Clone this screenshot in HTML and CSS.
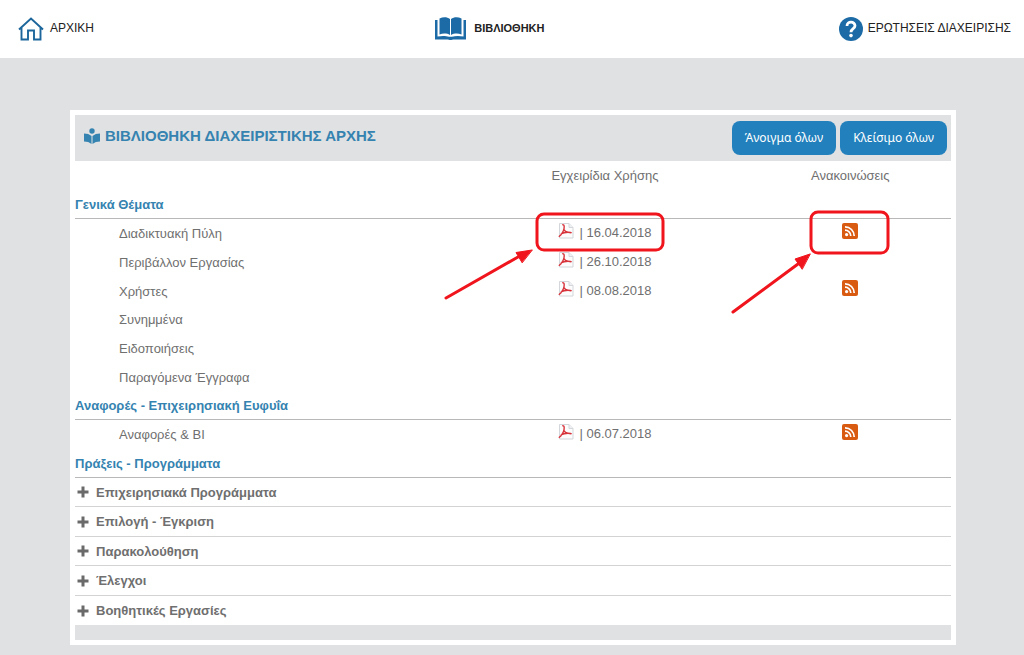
FILE: index.html
```html
<!DOCTYPE html>
<html lang="el">
<head>
<meta charset="utf-8">
<title>Βιβλιοθήκη Διαχειριστικής Αρχής</title>
<link rel="stylesheet" href="styles.css">
</head>
<body>
<svg class="defs" aria-hidden="true">
  <symbol id="pdf" viewBox="0 0 16 16">
    <path d="M1.5.5h9.500l4 4v10.500h-13.500z" fill="#fcfcfc" stroke="#d3d6da"/>
    <path d="M11 .5v4h4" fill="#eef1f4" stroke="#d3d6da"/>
    <path d="M4.300 1.800C6.800 1.200 6.500 5 5.300 8C4.300 10.500 2.500 12.500.8 13.800M5.800 6.500C7 8.300 8.200 9 9.500 9.300M2.800 11C5 9.800 8 9.300 10 9.300C12 9.300 13 9.400 13.600 10" fill="none" stroke="#d8343c" stroke-width="1.400"/>
  </symbol>
  <symbol id="rss" viewBox="0 0 16 16">
    <rect width="16" height="16" rx="2" fill="#d95b12"/>
    <circle cx="4.600" cy="11.600" r="1.600" fill="#fff"/>
    <path d="M3 7.200a5.800 5.800 0 0 1 5.800 5.800M3 3.800a9.200 9.200 0 0 1 9.200 9.200" fill="none" stroke="#fff" stroke-width="1.700"/>
  </symbol>
  <symbol id="plus" viewBox="0 0 12 12">
    <path d="M4.500.5h3v4h4v3h-4v4h-3v-4h-4v-3h4z" fill="#6a6a6a"/>
  </symbol>
</svg>

<header class="topbar">
  <a class="nav nav-home" href="#home">
    <svg class="nav-icon home-icon" viewBox="0 0 26 24" fill="none" stroke="#1c669b" stroke-width="1.900">
      <path d="M1 12.500L13 1.500L25 12.500M3.500 10.500V22.500H10V13.500H16V22.500H22.500V10.500"/>
    </svg>
    <span>ΑΡΧΙΚΗ</span>
  </a>
  <a class="nav nav-library" href="#library">
    <svg class="nav-icon book-icon" viewBox="0 0 31 23" fill="#1c6ba6">
      <path d="M4.500 1.500C8-.3 12-.3 15 2v16c-3-1.800-7-1.800-10.500-.6zM16 2c3-2.300 7-2.300 10.500-.5v15.900C23 16.200 19 16.200 16 18z"/>
      <path d="M0 3h2.500v16.500c4-.8 8.500-.8 11.500.3h3c3-1.100 7.500-1.100 11.500-.3V3H31v19.500H18c-.5.700-4.500.700-5 0H0z"/>
    </svg>
    <span>ΒΙΒΛΙΟΘΗΚΗ</span>
  </a>
  <a class="nav nav-help" href="#help">
    <svg class="nav-icon help-icon" viewBox="0 0 24 24">
      <circle cx="12" cy="12" r="12" fill="#1c6ba6"/>
      <path d="M8 9C8 4 16 4 16 8.800C16 11.800 12 11.500 12 15.200" fill="none" stroke="#fff" stroke-width="2.800"/>
      <circle cx="12" cy="18.600" r="1.800" fill="#fff"/>
    </svg>
    <span>ΕΡΩΤΗΣΕΙΣ ΔΙΑΧΕΙΡΙΣΗΣ</span>
  </a>
</header>

<main class="card">
  <div class="titlebar">
    <h1 class="title">
      <svg class="title-icon" viewBox="0 0 16 16" fill="#3583b0">
        <circle cx="8" cy="3" r="2.700"/>
        <path d="M0 5.500c3 0 5.500.8 7.500 2.500v8C5.500 14.300 3 13.500 0 13.500zM16 5.500c-3 0-5.500.8-7.500 2.500v8c2-1.700 4.500-2.500 7.500-2.500z"/>
      </svg>
      <span>ΒΙΒΛΙΟΘΗΚΗ ΔΙΑΧΕΙΡΙΣΤΙΚΗΣ ΑΡΧΗΣ</span>
    </h1>
    <div class="actions">
      <button class="btn" type="button">Άνοιγμα όλων</button>
      <button class="btn" type="button">Κλείσιμο όλων</button>
    </div>
  </div>

  <table class="library">
    <colgroup><col class="col-name"><col class="col-manual"><col class="col-news"></colgroup>
    <thead>
      <tr><td></td><th scope="col">Εγχειρίδια Χρήσης</th><th scope="col">Ανακοινώσεις</th></tr>
    </thead>
    <tbody>
      <tr class="section"><th colspan="3" scope="rowgroup">Γενικά Θέματα</th></tr>
      <tr class="item">
        <td>Διαδικτυακή Πύλη</td>
        <td>
          <span class="marked">
            <a class="manual" href="#m1"><svg class="icon"><use href="#pdf"/></svg><span>| 16.04.2018</span></a>
            <svg class="mark mark-manual" viewBox="0 0 222 92" aria-hidden="true">
              <rect x="93" y="5" width="126" height="36" rx="7"/>
              <path d="M2 89L74 48"/>
              <path class="head" d="M88 41L72 43.500L78 53.500z"/>
            </svg>
          </span>
        </td>
        <td>
          <span class="marked">
            <a class="news" href="#n1" aria-label="Ανακοινώσεις"><svg class="icon"><use href="#rss"/></svg></a>
            <svg class="mark mark-news" viewBox="0 0 160 106" aria-hidden="true">
              <rect x="80" y="4" width="77" height="41" rx="7"/>
              <path d="M2 104L67 56"/>
              <path class="head" d="M79 46L64 51L71 61z"/>
            </svg>
          </span>
        </td>
      </tr>
      <tr class="item">
        <td>Περιβάλλον Εργασίας</td>
        <td><a class="manual" href="#m2"><svg class="icon"><use href="#pdf"/></svg><span>| 26.10.2018</span></a></td>
        <td></td>
      </tr>
      <tr class="item">
        <td>Χρήστες</td>
        <td><a class="manual" href="#m3"><svg class="icon"><use href="#pdf"/></svg><span>| 08.08.2018</span></a></td>
        <td><a class="news" href="#n3" aria-label="Ανακοινώσεις"><svg class="icon"><use href="#rss"/></svg></a></td>
      </tr>
      <tr class="item"><td>Συνημμένα</td><td></td><td></td></tr>
      <tr class="item"><td>Ειδοποιήσεις</td><td></td><td></td></tr>
      <tr class="item"><td>Παραγόμενα Έγγραφα</td><td></td><td></td></tr>
    </tbody>
    <tbody>
      <tr class="section"><th colspan="3" scope="rowgroup">Αναφορές - Επιχειρησιακή Ευφυΐα</th></tr>
      <tr class="item">
        <td>Αναφορές &amp; BI</td>
        <td><a class="manual" href="#m4"><svg class="icon"><use href="#pdf"/></svg><span>| 06.07.2018</span></a></td>
        <td><a class="news" href="#n4" aria-label="Ανακοινώσεις"><svg class="icon"><use href="#rss"/></svg></a></td>
      </tr>
    </tbody>
    <tbody>
      <tr class="section"><th colspan="3" scope="rowgroup">Πράξεις - Προγράμματα</th></tr>
      <tr class="group"><td colspan="3"><button class="toggle" type="button"><svg class="plus"><use href="#plus"/></svg>Επιχειρησιακά Προγράμματα</button></td></tr>
      <tr class="group"><td colspan="3"><button class="toggle" type="button"><svg class="plus"><use href="#plus"/></svg>Επιλογή - Έγκριση</button></td></tr>
      <tr class="group"><td colspan="3"><button class="toggle" type="button"><svg class="plus"><use href="#plus"/></svg>Παρακολούθηση</button></td></tr>
      <tr class="group"><td colspan="3"><button class="toggle" type="button"><svg class="plus"><use href="#plus"/></svg>Έλεγχοι</button></td></tr>
      <tr class="group"><td colspan="3"><button class="toggle" type="button"><svg class="plus"><use href="#plus"/></svg>Βοηθητικές Εργασίες</button></td></tr>
    </tbody>
  </table>
  <div class="card-foot"></div>
</main>
</body>
</html>
```
FILE: styles.css
```css
* { box-sizing: border-box; }

body {
  margin: 0;
  background: #e0e1e3;
  color: #6f6f6f;
  font-family: "Liberation Sans", Arial, sans-serif;
  font-size: 13px;
}

a { color: inherit; text-decoration: none; }
button { font: inherit; color: inherit; cursor: pointer; }
.defs { display: none; }

/* Top navigation */
.topbar {
  display: grid;
  grid-template-columns: 42.5% 1fr auto;
  align-items: center;
  padding: 16px 0 17px;
  background: #fff;
  color: #222;
  font-size: 12px;
}
.nav { display: flex; align-items: center; line-height: 25px; }
.nav-icon { flex: none; }
.nav-home { padding-left: 18px; gap: 6px; }
.home-icon { width: 26px; height: 24px; }
.nav-library { gap: 8px; font-weight: bold; font-size: 11px; }
.book-icon { width: 31px; height: 23px; }
.nav-help { padding-right: 13px; gap: 5px; }
.help-icon { width: 24px; height: 24px; }

/* Library card */
.card {
  margin: 52px 68px 10px 70px;
  padding: 5px;
  background: #fff;
}
.titlebar {
  display: flex;
  align-items: center;
  justify-content: space-between;
  padding: 6px 4px 6px 9px;
  background: #e0e1e3;
}
.title {
  display: flex;
  align-items: center;
  gap: 5px;
  margin: 0;
  padding-bottom: 4px;
  color: #3583b0;
  font-size: 15px;
  line-height: 20px;
}
.title-icon { width: 16px; height: 16px; }
.actions { display: flex; gap: 4px; }
.btn {
  padding: 0 13px;
  border: 0;
  border-radius: 8px;
  background: #2280bd;
  color: #fff;
  font-family: "Noto Sans", sans-serif;
  font-size: 12px;
  line-height: 34px;
}

.library {
  width: 100%;
  border-collapse: separate;
  border-spacing: 0;
  table-layout: fixed;
}
.col-name { width: 44%; }
.col-manual { width: 33%; }
.col-news { width: 23%; }
.library th, .library td { padding: 0; text-align: center; }
.library thead th { height: 29px; font-weight: normal; }
.library .section th {
  height: 29px;
  border-bottom: 1px solid #b8b8b8;
  color: #3583b0;
  text-align: left;
}
.library .item td { height: 29px; }
.library .item:nth-child(3n+1) td { height: 28px; }
.library .item td:first-child { padding-left: 44px; text-align: left; }

.manual { display: inline-flex; gap: 5px; vertical-align: middle; }
.icon { width: 16px; height: 16px; }
.manual .icon { margin-bottom: 5px; }
.manual span { line-height: 20px; }
.news { display: inline-flex; padding-bottom: 6px; vertical-align: middle; }

.library .group td { height: 30px; border-bottom: 1px solid #d3d3d3; text-align: left; }
.library .group:nth-child(even) td { height: 29px; }
.library .group:last-child td { border-bottom: 0; }
.toggle {
  display: flex;
  align-items: center;
  gap: 7px;
  padding: 0 2px;
  border: 0;
  background: none;
  font-weight: bold;
}
.plus { width: 12px; height: 12px; }
.card-foot { height: 15px; background: #e0e1e3; }

/* Red callouts drawn over the first row */
.marked { position: relative; display: inline-block; vertical-align: middle; }
.mark {
  position: absolute;
  fill: none;
  stroke: #f0141c;
  stroke-width: 3;
  stroke-linecap: round;
  pointer-events: none;
}
.mark .head { fill: #f0141c; stroke-width: 1; }
.mark-manual { top: -14px; right: -14px; width: 222px; height: 92px; }
.mark-news { top: -15px; right: -33px; width: 160px; height: 106px; }
```
